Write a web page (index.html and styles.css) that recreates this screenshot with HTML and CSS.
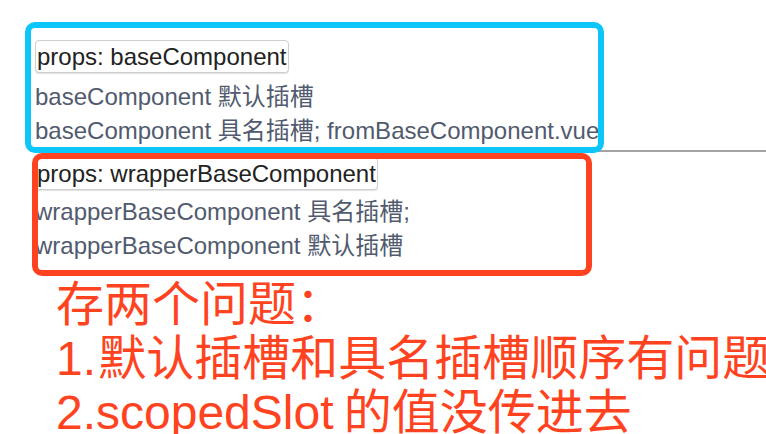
FILE: index.html
```html
<!DOCTYPE html>
<html lang="zh-CN">
<head>
<meta charset="utf-8">
<title>slot demo</title>
<link rel="stylesheet" href="styles.css">
</head>
<body>
<main class="page">
  <section class="comp comp-base">
    <button class="props-btn" type="button">props: baseComponent</button>
    <div class="line">baseComponent 默认插槽</div>
    <div class="line">baseComponent 具名插槽; fromBaseComponent.vue</div>
  </section>
  <hr class="divider">
  <section class="comp comp-wrapper">
    <button class="props-btn" type="button">props: wrapperBaseComponent</button>
    <div class="line line-first">wrapperBaseComponent 具名插槽;</div>
    <div class="line">wrapperBaseComponent 默认插槽</div>
  </section>
  <div class="note">
    <div class="note-line">存两个问题：</div>
    <div class="note-line note-tight">1. 默认插槽和具名插槽顺序有问题</div>
    <div class="note-line note-tight-sm">2.scopedSlot 的值没传进去</div>
  </div>
  <div class="mark mark-blue"></div>
  <div class="mark mark-red"></div>
</main>
</body>
</html>
```
FILE: styles.css
```css
html, body {
  margin: 0;
  padding: 0;
  background: #ffffff;
  overflow: hidden;
}

.page {
  position: relative;
  width: 766px;
  height: 434px;
  padding-top: 40px;
  box-sizing: border-box;
  font-family: "Liberation Sans", Arial, "Noto Sans CJK SC", sans-serif;
  font-size: 24px;
  color: #515a6e;
}

.comp {
  padding-left: 35px;
  white-space: nowrap;
}

.props-btn {
  display: block;
  margin: 0 0 7px 0;
  padding: 2px 1px;
  height: 33px;
  box-sizing: border-box;
  font-family: inherit;
  font-size: 24px;
  line-height: 27px;
  color: #222222;
  background: #ffffff;
  border: 1px solid #cfcfcf;
  border-radius: 4px;
  box-shadow: 0 1px 1px rgba(0, 0, 0, 0.12);
}

.line {
  height: 34px;
  line-height: 34px;
}

.comp-wrapper .props-btn {
  margin-bottom: 5px;
}

.divider {
  margin: 2px 0 5px 30px;
  height: 0;
  border: 0;
  border-top: 2px solid #a3a3a3;
}

.note {
  margin: 15px 0 0 56px;
  font-size: 48px;
  line-height: 54px;
  color: #ff4320;
  white-space: nowrap;
}

.note-tight {
  word-spacing: -11px;
}

.note-tight-sm {
  word-spacing: -3px;
}

.mark {
  position: absolute;
  box-sizing: border-box;
  border-radius: 10px;
  pointer-events: none;
}

.mark-blue {
  left: 25px;
  top: 22px;
  width: 579px;
  height: 131px;
  border: 6px solid #0cc6fa;
}

.mark-red {
  left: 32px;
  top: 153px;
  width: 560px;
  height: 123px;
  border: 6px solid #ff4320;
}
```
